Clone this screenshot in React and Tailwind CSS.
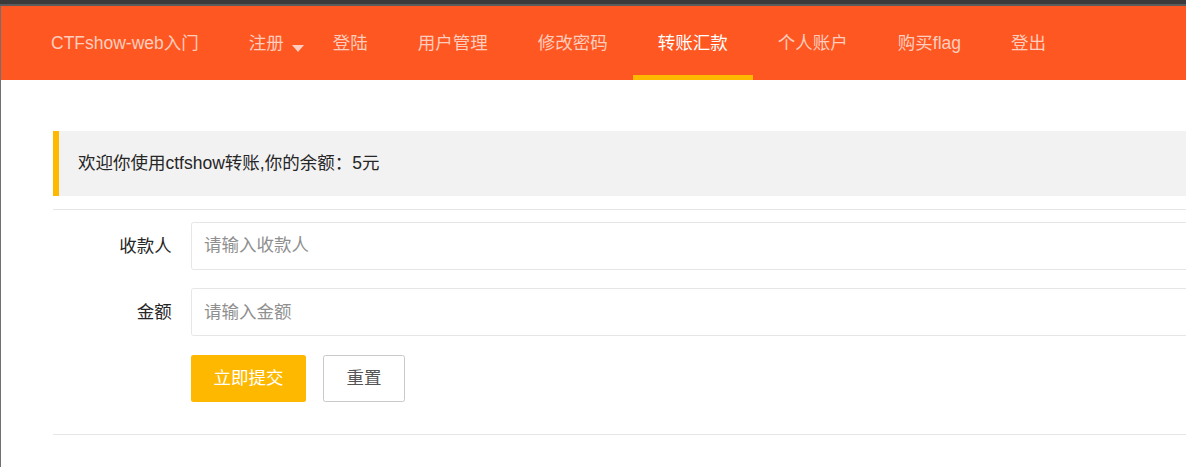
const navItems = [
  { label: "注册", more: true },
  { label: "登陆" },
  { label: "用户管理" },
  { label: "修改密码" },
  { label: "转账汇款", active: true },
  { label: "个人账户" },
  { label: "购买flag" },
  { label: "登出" },
];

const App = () => {
  return (
    <div className="min-h-screen overflow-hidden bg-white font-['Liberation_Sans','Noto_Sans_CJK_SC',sans-serif] text-[17.5px] text-[#262626]">
      {/* window top edge */}
      <div className="h-[4px] bg-[#3b3b3b]"></div>
      <div className="h-[2px] bg-[#5c5c5c]"></div>

      <div className="border-l border-[#707070] min-h-[461px]">
        {/* Nav */}
        <nav className="flex h-[74px] bg-[#FF5722] pl-[25px] text-[#FFCDBD]">
          <a className="flex items-center px-[25px] whitespace-nowrap">CTFshow-web入门</a>
          {navItems.map((item) => (
            <a
              key={item.label}
              className={`relative flex items-center whitespace-nowrap pl-[25px] ${
                item.more ? "pr-[24px]" : "pr-[25px]"
              } ${item.active ? "text-white" : ""}`}
            >
              {item.label}
              {item.more && (
                <span className="absolute right-[4px] top-[39px] h-0 w-0 border-x-[6.5px] border-t-[7px] border-x-transparent border-t-[#FFCDBD]"></span>
              )}
              {item.active && (
                <span className="absolute bottom-0 left-0 right-0 h-[5px] bg-[#FFB800]"></span>
              )}
            </a>
          ))}
        </nav>

        {/* Content */}
        <div className="-mr-[40px] pl-[52px] pt-[51px]">
          <div className="border-l-[6px] border-[#FFB800] bg-[#f2f2f2] py-[18.75px] pl-[19px] leading-[27.5px]">
            欢迎你使用ctfshow转账,你的余额：5元
          </div>

          <div className="my-[12.5px] h-px bg-[#e6e6e6]"></div>

          <form onSubmit={(e) => e.preventDefault()}>
            <div className="mb-[18.75px] flex items-center">
              <label className="w-[137.5px] shrink-0 pr-[18.75px] text-right">收款人</label>
              <input
                type="text"
                placeholder="请输入收款人"
                className="h-[47.5px] flex-1 rounded-[2.5px] border border-[#e6e6e6] pl-[12.5px] outline-none placeholder:text-[#8f8f8f]"
              />
            </div>
            <div className="mb-[18.75px] flex items-center">
              <label className="w-[137.5px] shrink-0 pr-[18.75px] text-right">金额</label>
              <input
                type="text"
                placeholder="请输入金额"
                className="h-[47.5px] flex-1 rounded-[2.5px] border border-[#e6e6e6] pl-[12.5px] outline-none placeholder:text-[#8f8f8f]"
              />
            </div>
            <div className="ml-[138px] flex gap-[17px]">
              <button
                type="submit"
                className="h-[47.5px] rounded-[2.5px] bg-[#FFB800] px-[22.5px] text-white"
              >
                立即提交
              </button>
              <button
                type="reset"
                className="h-[47.5px] rounded-[2.5px] border border-[#C9C9C9] bg-white px-[22.5px] text-[#555]"
              >
                重置
              </button>
            </div>
          </form>

          <div className="mt-[31.5px] mb-[12.5px] h-px bg-[#e6e6e6]"></div>
        </div>
      </div>
    </div>
  );
};

export default App;
